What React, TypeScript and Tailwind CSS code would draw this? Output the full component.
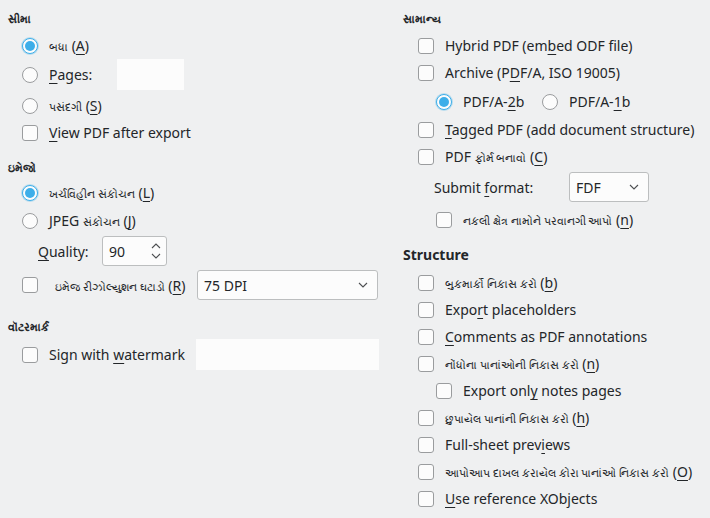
import React from "react";

const font = { fontFamily: '"Noto Sans", "Open Sans", sans-serif' };

function U({ children }: { children: React.ReactNode }) {
  return <span className="underline underline-offset-[3px] decoration-1">{children}</span>;
}

function G({ children }: { children: React.ReactNode }) {
  return <span className="text-[11px]">{children}</span>;
}

function Check() {
  return <span className="inline-block w-4 h-4 shrink-0 rounded-[3px] border border-[#9a9c9e] bg-[#fcfcfc]" />;
}

function Radio({ on }: { on?: boolean }) {
  if (on)
    return (
      <span className="flex items-center justify-center w-4 h-4 shrink-0 rounded-full border border-[#3daee9] bg-[#fcfcfc] shadow-[0_0_0_1px_rgba(61,174,233,0.3)]">
        <span className="w-[10px] h-[10px] rounded-full bg-[#3daee9]" />
      </span>
    );
  return <span className="inline-block w-4 h-4 shrink-0 rounded-full border border-[#9a9c9e] bg-[#fcfcfc]" />;
}

function Chevron() {
  return (
    <svg width="10" height="6" viewBox="0 0 10 6" fill="none">
      <path d="M1 1l4 4 4-4" stroke="#4d4f51" strokeWidth="1.1" />
    </svg>
  );
}

function Header({ children }: { children: React.ReactNode }) {
  return <div className="h-[18px] flex items-center font-bold text-[11px]">{children}</div>;
}

function CRow({ children, indent = "", radio, on }: { children: React.ReactNode; indent?: string; radio?: boolean; on?: boolean }) {
  return (
    <div className={`h-[27px] flex items-center ${indent}`}>
      {radio ? <Radio on={on} /> : <Check />}
      <span className="ml-[11px] whitespace-nowrap">{children}</span>
    </div>
  );
}

export default function App() {
  return (
    <div style={font} className="w-[710px] h-[518px] bg-[#eff0f1] text-[#232629] text-[14px] flex overflow-hidden">
      {/* left column */}
      <div className="w-[390px] shrink-0 pl-[8px] pt-[10px] flex flex-col">
        <Header>સીમા</Header>
        <div className="mt-[4px]">
          <CRow indent="pl-[14px]" radio on>
            <G>બધા</G> (<U>A</U>)
          </CRow>
        </div>
        <div className="h-[31px] flex items-center pl-[14px]">
          <Radio />
          <span className="ml-[11px]">
            <U>P</U>ages:
          </span>
          <span className="ml-[25px] w-[67px] h-[31px] bg-[#fcfcfc]" />
        </div>
        <div className="mt-[2px]">
          <CRow indent="pl-[14px]" radio>
            <G>પસંદગી</G> (<U>S</U>)
          </CRow>
        </div>
        <CRow indent="pl-[14px]">
          <U>V</U>iew PDF after export
        </CRow>
        <div className="mt-[13px]">
          <Header>ઇમેજો</Header>
        </div>
        <div className="mt-[2px]">
          <CRow indent="pl-[14px]" radio on>
            <G>ખર્ચવિહીન સંકોચન</G> (<U>L</U>)
          </CRow>
        </div>
        <div className="mt-[1px]">
          <CRow indent="pl-[14px]" radio>
            JPEG <G>સંકોચન</G> (<U>J</U>)
          </CRow>
        </div>
        <div className="h-[30px] mt-[2px] flex items-center pl-[30px]">
          <span className="w-[64px]">
            <U>Q</U>uality:
          </span>
          <div className="w-[65px] h-[30px] rounded-[3px] border border-[#bcbebf] bg-[#fcfcfc] flex items-center justify-between pl-[6px] pr-[4px]">
            <span>90</span>
            <svg width="12" height="18" viewBox="0 0 12 18" fill="none">
              <path d="M2 6l4-4 4 4" stroke="#4d4f51" strokeWidth="1.1" />
              <path d="M2 12l4 4 4-4" stroke="#4d4f51" strokeWidth="1.1" />
            </svg>
          </div>
        </div>
        <div className="h-[30px] mt-[4px] flex items-center pl-[14px]">
          <Check />
          <span className="ml-[17px] w-[142px] whitespace-nowrap">
            <G>ઇમેજ રીઝોલ્યુશન ઘટાડો</G> (<U>R</U>)
          </span>
          <div className="w-[181px] h-[30px] rounded-[3px] border border-[#bcbebf] bg-[#fcfcfc] flex items-center justify-between pl-[6px] pr-[9px]">
            <span>75 DPI</span>
            <Chevron />
          </div>
        </div>
        <div className="mt-[18px]">
          <Header>વૉટરમાર્ક</Header>
        </div>
        <div className="h-[31px] mt-[3px] flex items-center pl-[14px]">
          <Check />
          <span className="ml-[11px] w-[147px] whitespace-nowrap">
            Sign with <U>w</U>atermark
          </span>
          <span className="w-[183px] h-[31px] bg-[#fcfcfc]" />
        </div>
      </div>

      {/* right column */}
      <div className="flex-1 pl-[13px] pt-[10px] flex flex-col">
        <Header>સામાન્ય</Header>
        <div className="mt-[4px] flex flex-col">
          <CRow indent="pl-[15px]">
            Hybrid PDF (em<U>b</U>ed ODF file)
          </CRow>
          <CRow indent="pl-[15px]">
            Archive (P<U>D</U>F/A, ISO 19005)
          </CRow>
          <div className="h-[27px] mt-[2px] flex items-center pl-[33px]">
            <Radio on />
            <span className="ml-[11px] w-[79px]">
              PDF/A-<U>2</U>b
            </span>
            <Radio />
            <span className="ml-[11px]">
              PDF/A-<U>1</U>b
            </span>
          </div>
          <div className="mt-[1px]">
            <CRow indent="pl-[15px]">
              <U>T</U>agged PDF (add document structure)
            </CRow>
          </div>
          <CRow indent="pl-[15px]">
            PDF <G>ફોર્મ બનાવો</G> (<U>C</U>)
          </CRow>
          <div className="h-[30px] mt-[2px] flex items-center pl-[31px]">
            <span className="w-[135px]">
              Submit <U>f</U>ormat:
            </span>
            <div className="w-[80px] h-[30px] rounded-[3px] border border-[#bcbebf] bg-[#fcfcfc] flex items-center justify-between pl-[6px] pr-[9px]">
              <span>FDF</span>
              <Chevron />
            </div>
          </div>
          <div className="mt-[4px]">
            <CRow indent="pl-[33px]">
              <G>નકલી ક્ષેત્ર નામોને પરવાનગી આપો</G> (<U>n</U>)
            </CRow>
          </div>
          <div className="h-[20px] mt-[11px] flex items-center font-bold text-[14px]">Structure</div>
          <div className="mt-[5px] flex flex-col">
            <CRow indent="pl-[15px]">
              <G>બુકમાર્કો નિકાસ કરો</G> (<U>b</U>)
            </CRow>
            <CRow indent="pl-[15px]">
              Expo<U>r</U>t placeholders
            </CRow>
            <CRow indent="pl-[15px]">
              <U>C</U>omments as PDF annotations
            </CRow>
            <CRow indent="pl-[15px]">
              <G>નોંધોના પાનાંઓની નિકાસ કરો</G> (<U>n</U>)
            </CRow>
            <CRow indent="pl-[33px]">
              Export onl<U>y</U> notes pages
            </CRow>
            <CRow indent="pl-[15px]">
              <G>છુપાયેલ પાનાંની નિકાસ કરો</G> (<U>h</U>)
            </CRow>
            <CRow indent="pl-[15px]">
              Full-sheet prev<U>i</U>ews
            </CRow>
            <CRow indent="pl-[15px]">
              <G>આપોઆપ દાખલ કરાયેલ કોરા પાનાંઓ નિકાસ કરો</G> (<U>O</U>)
            </CRow>
            <CRow indent="pl-[15px]">
              <U>U</U>se reference XObjects
            </CRow>
          </div>
        </div>
      </div>
    </div>
  );
}
